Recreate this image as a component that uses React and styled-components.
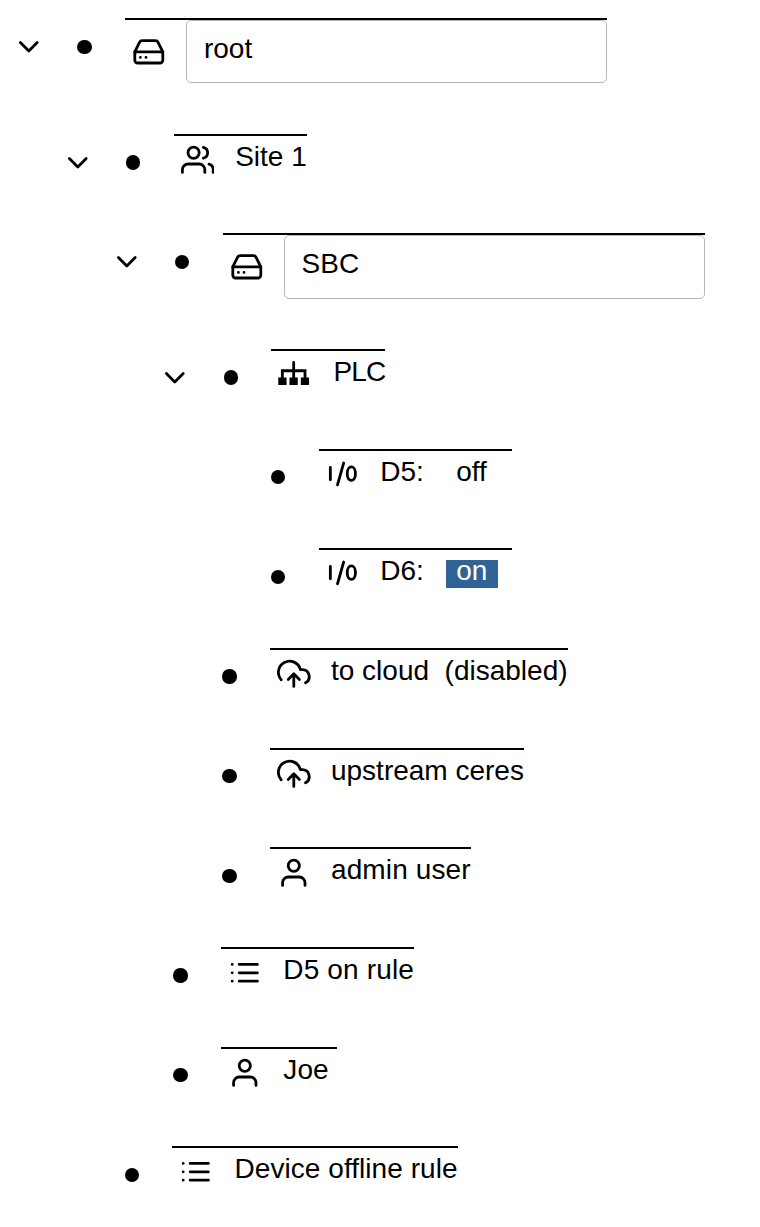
import React from "react";
import styled, { createGlobalStyle } from "styled-components";

const GlobalStyle = createGlobalStyle`
  body {
    margin: 0;
    background: #fff;
    color: #000;
    font-family: "Liberation Sans", Arial, Helvetica, sans-serif;
    font-size: 28px;
    line-height: 32px;
  }
`;

const Page = styled.main`
  box-sizing: border-box;
  height: 1227px;
  padding: 18.2px 0 0 12.1px;
  overflow: hidden;
`;

const Branch = styled.ul`
  list-style: none;
  margin: 0;
  padding: 0 0 0 ${(p) => (p.$nested ? "48.8px" : "0")};
`;

const Row = styled.div`
  display: flex;
  align-items: flex-start;
  height: ${(p) => (p.$editable ? "115.55px" : "99.67px")};
`;

const Toggle = styled.span`
  display: flex;
  flex: none;
  width: ${(p) => (p.$leaf ? "63.8px" : "65.2px")};
  padding-top: 12.1px;
`;

const Bullet = styled.span`
  flex: none;
  width: 14.4px;
  height: 14.4px;
  margin: 21.4px 33.3px 0 0;
  border-radius: 50%;
  background: #000;
`;

const Node = styled.div`
  display: flex;
  align-items: flex-start;
  border-top: 2px solid #000;
  padding-left: 7px;
`;

const IconSlot = styled.span`
  display: flex;
  flex: none;
  width: ${(p) => 54.4 + (p.$extra || 0)}px;
  padding-top: ${(p) => (p.$editable ? "14.4px" : "7px")};
`;

const Label = styled.span`
  display: flex;
  align-items: baseline;
  padding-top: 5px;
  letter-spacing: ${(p) => p.$tracking || 0}px;
  white-space: pre;
`;

const NameInput = styled.input`
  box-sizing: border-box;
  width: 421px;
  height: 63.2px;
  margin: 0;
  padding: 0 17px 5px 16.6px;
  border: 1px solid #b9b9b3;
  border-radius: 5px;
  background: #fff;
  color: #000;
  font: inherit;
  outline: none;
`;

const State = styled.span`
  height: 20px;
  line-height: 22px;
  margin: 0 14.6px 0 22px;
  padding: 0 10.4px 8px;
  color: ${(p) => (p.$on ? "#fff" : "#000")};
  background: ${(p) => (p.$on ? "#316496" : "transparent")};
`;

const Glyph = styled.svg`
  display: block;
  width: 33.6px;
  height: 33.6px;
  fill: none;
  stroke: #000;
  stroke-width: 2;
  stroke-linecap: round;
  stroke-linejoin: round;
`;

const icons = {
  chevron: <path d="M6 9l6 6 6-6" />,
  drive: (
    <>
      <path d="M22 12H2" />
      <path d="M5.45 5.11L2 12v6a2 2 0 0 0 2 2h16a2 2 0 0 0 2-2v-6l-3.45-6.89A2 2 0 0 0 16.76 4H7.24a2 2 0 0 0-1.79 1.11z" />
      <path d="M6 16h.01M10 16h.01" />
    </>
  ),
  users: (
    <>
      <path d="M17 21v-2a4 4 0 0 0-4-4H5a4 4 0 0 0-4 4v2" />
      <circle cx="9" cy="7" r="4" />
      <path d="M23 21v-2a4 4 0 0 0-3-3.87M16 3.13a4 4 0 0 1 0 7.75" />
    </>
  ),
  user: (
    <>
      <path d="M20 21v-2a4 4 0 0 0-4-4H8a4 4 0 0 0-4 4v2" />
      <circle cx="12" cy="7" r="4" />
    </>
  ),
  cloud: (
    <>
      <path d="M16 16l-4-4-4 4M12 12v9" />
      <path d="M20.39 18.39A5 5 0 0 0 18 9h-1.26A8 8 0 1 0 3 16.3" />
    </>
  ),
  list: <path d="M8 6h13M8 12h13M8 18h13M3 6h.01M3 12h.01M3 18h.01" />,
  io: (
    <>
      <path d="M3.1 6.8v8.8M12.6 3.6L8.2 19.2" />
      <rect x="15.2" y="6.4" width="5.8" height="9.6" rx="2.9" ry="4.2" />
    </>
  ),
  network: (
    <>
      <path d="M11.2 3.1v12M3.1 15V9.1h16.2V15" strokeLinejoin="miter" />
      <path d="M.2 13.9h5.9v5.3H.2zM8.2 13.9h5.9v5.3H8.2zM16.3 13.9h5.9v5.3h-5.9z" fill="#000" stroke="none" />
    </>
  ),
};

function Icon({ name }) {
  return (
    <Glyph viewBox="0 0 24 24" aria-hidden="true">
      {icons[name]}
    </Glyph>
  );
}

const tree = [
  {
    icon: "drive",
    label: "root",
    editable: true,
    children: [
      {
        icon: "users",
        label: "Site 1",
        children: [
          {
            icon: "drive",
            label: "SBC",
            editable: true,
            children: [
              {
                icon: "network",
                label: "PLC",
                extra: 0.7,
                tracking: -0.9,
                children: [
                  { icon: "io", label: "D5:", state: "off" },
                  { icon: "io", label: "D6:", state: "on" },
                ],
              },
              { icon: "cloud", label: "to cloud  (disabled)", extra: -0.4 },
              { icon: "cloud", label: "upstream ceres", extra: -0.4 },
              { icon: "user", label: "admin user", extra: -0.4, tracking: 0.12 },
            ],
          },
          { icon: "list", label: "D5 on rule", extra: 0.7, tracking: 0.16 },
          { icon: "user", label: "Joe ", extra: 0.7, tracking: 0.12 },
        ],
      },
      { icon: "list", label: "Device offline rule", extra: 0.7, tracking: 0.06 },
    ],
  },
];

function TreeBranch({ items, nested }) {
  return (
    <Branch $nested={nested}>
      {items.map((item) => (
        <li key={item.label}>
          <Row $editable={item.editable}>
            <Toggle $leaf={!item.children}>{item.children && <Icon name="chevron" />}</Toggle>
            <Bullet />
            <Node>
              <IconSlot $editable={item.editable} $extra={item.extra}>
                <Icon name={item.icon} />
              </IconSlot>
              {item.editable ? (
                <NameInput defaultValue={item.label} aria-label="Name" />
              ) : (
                <Label $tracking={item.tracking}>
                  {item.label}
                  {item.state && <State $on={item.state === "on"}>{item.state}</State>}
                </Label>
              )}
            </Node>
          </Row>
          {item.children && <TreeBranch items={item.children} nested />}
        </li>
      ))}
    </Branch>
  );
}

export default function App() {
  return (
    <Page>
      <GlobalStyle />
      <TreeBranch items={tree} />
    </Page>
  );
}
